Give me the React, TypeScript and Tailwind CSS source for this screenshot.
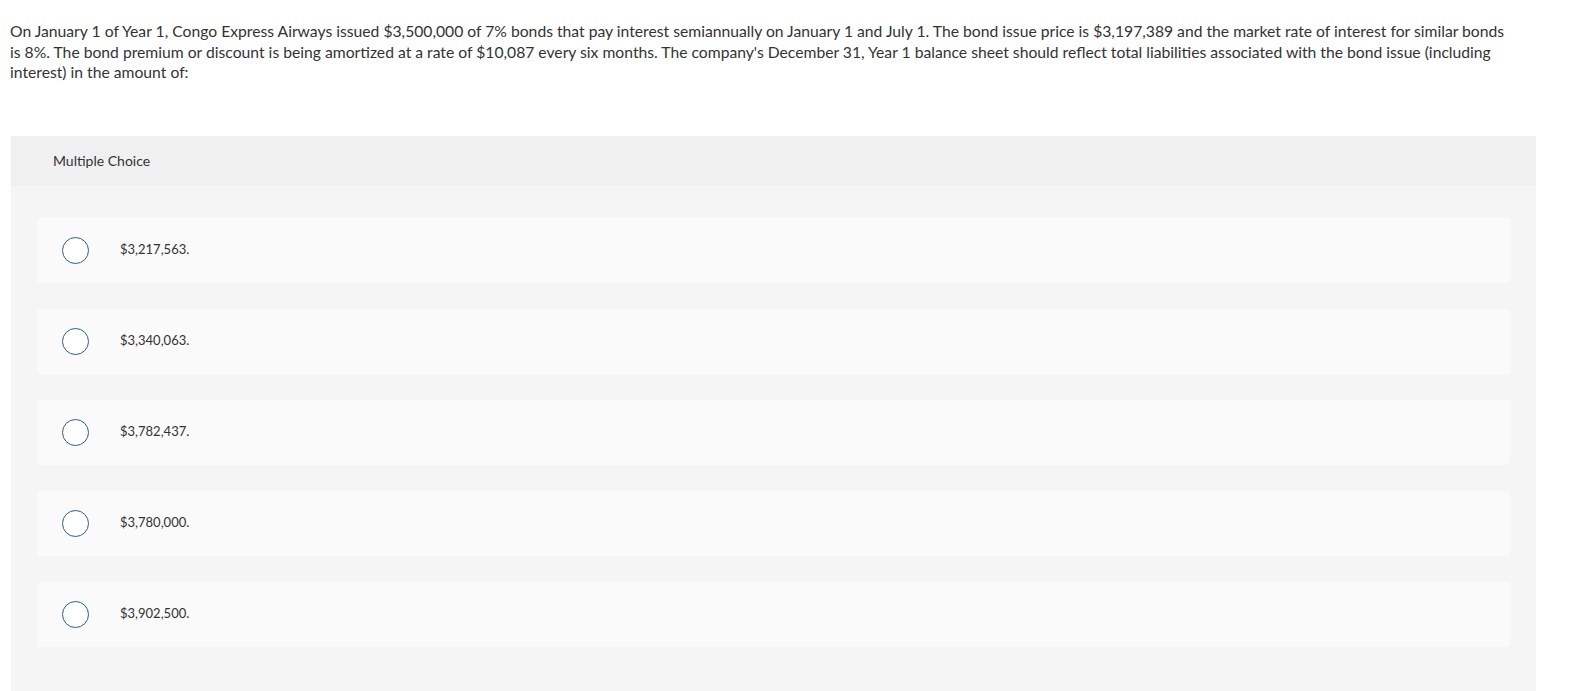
const question =
  "On January 1 of Year 1, Congo Express Airways issued $3,500,000 of 7% bonds that pay interest semiannually on January 1 and July 1. The bond issue price is $3,197,389 and the market rate of interest for similar bonds is 8%. The bond premium or discount is being amortized at a rate of $10,087 every six months. The company's December 31, Year 1 balance sheet should reflect total liabilities associated with the bond issue (including interest) in the amount of:";

const choices = ["$3,217,563.", "$3,340,063.", "$3,782,437.", "$3,780,000.", "$3,902,500."];

export default function App() {
  return (
    <div className="min-h-screen bg-white" style={{ fontFamily: "Lato, 'Open Sans', sans-serif" }}>
      {/* Question */}
      <p className="pl-[10px] pr-[58px] pt-[21px] text-[15.7px] leading-[20.5px] text-[#333]">{question}</p>

      {/* Choices panel */}
      <div className="ml-[11px] mr-[36px] mt-[53px] bg-[#f5f5f5] pb-[60px]">
        <div className="flex h-[50px] items-center bg-[#f0f0f0] px-[42px] text-[14px] text-[#333]">
          Multiple Choice
        </div>
        <div className="flex flex-col gap-[26px] px-[26px] pt-[32px]">
          {choices.map((c) => (
            <label
              key={c}
              className="flex h-[65px] cursor-pointer items-center rounded-[3px] bg-[#fafafa] pl-[25px]"
            >
              <span className="h-[27px] w-[27px] shrink-0 rounded-full border-[1.5px] border-[#2e5c8a] bg-white" />
              <span className="ml-[31px] text-[13px] text-[#333]">{c}</span>
            </label>
          ))}
        </div>
      </div>
    </div>
  );
}
